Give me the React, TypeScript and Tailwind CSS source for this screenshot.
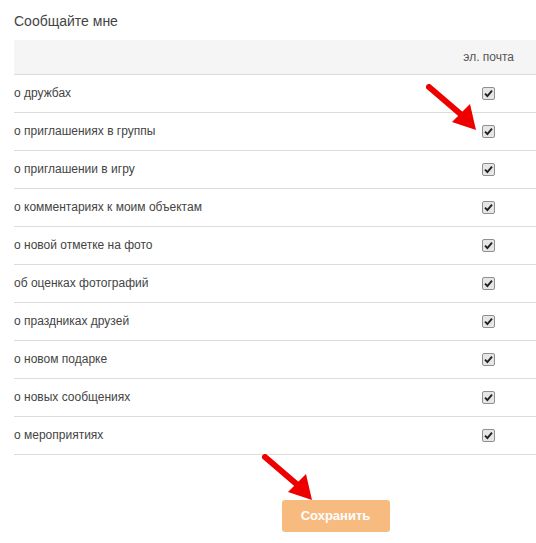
const items = [
  "о дружбах",
  "о приглашениях в группы",
  "о приглашении в игру",
  "о комментариях к моим объектам",
  "о новой отметке на фото",
  "об оценках фотографий",
  "о праздниках друзей",
  "о новом подарке",
  "о новых сообщениях",
  "о мероприятиях",
];

const CheckBox = () => (
  <span className="flex h-[13px] w-[13px] items-center justify-center rounded-[2px] border border-[#8f8f8f] bg-[#e6e6e6]">
    <svg width="9" height="9" viewBox="0 0 9 9">
      <path d="M1 4.6 L3.4 7 L8 1.6" fill="none" stroke="#222" strokeWidth="1.9" />
    </svg>
  </span>
);

const Arrow = ({ className }: { className: string }) => (
  <svg className={className} width="56" height="50" viewBox="0 0 56 50">
    <line x1="3" y1="3" x2="38" y2="33" stroke="#ee0000" strokeWidth="6" strokeLinecap="round" />
    <polygon points="50,46 26,38 44,20" fill="#ee0000" />
  </svg>
);

export default function App() {
  return (
    <div className="relative h-[543px] w-[536px] bg-white font-['Liberation_Sans',Arial,sans-serif] text-[#444]">
      {/* Title */}
      <h2 className="pl-[14px] pt-[12px] text-[14px] leading-[18px] text-[#444]">Сообщайте мне</h2>

      {/* Table */}
      <div className="ml-[14px] mt-[10px]">
        <div className="flex h-[35px] items-center justify-end border-b border-[#dcdcdc] bg-[#f5f5f5] pr-[22px] text-[12px] text-[#555]">
          эл. почта
        </div>
        {items.map((t) => (
          <div key={t} className="flex h-[38px] items-center justify-between border-b border-[#dcdcdc] pr-[41px] text-[12px] text-[#444]">
            <span className="-mt-[1px]">{t}</span>
            <CheckBox />
          </div>
        ))}
      </div>

      {/* Save */}
      <div className="flex justify-center pl-[135px] pt-[45px]">
        <button className="h-[32px] w-[108px] rounded-[3px] bg-[#f7bb80] text-[13px] font-bold text-white">
          Сохранить
        </button>
      </div>

      {/* Arrows */}
      <Arrow className="absolute left-[426px] top-[84px]" />
      <Arrow className="absolute left-[262px] top-[454px]" />
    </div>
  );
}
